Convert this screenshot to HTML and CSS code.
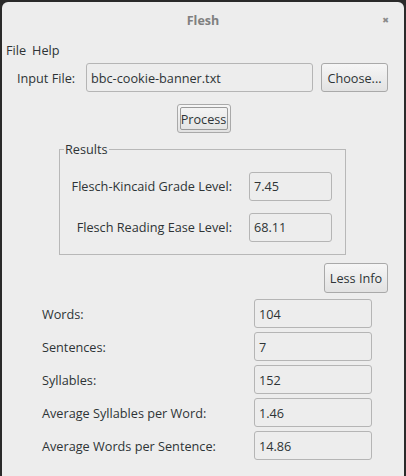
FILE: index.html
```html
<!DOCTYPE html>
<html>
<head>
<meta charset="utf-8">
<link rel="stylesheet" href="styles.css">
</head>
<body>
<div class="window">
  <div class="titlebar">
    <span class="title">Flesh</span>
    <span class="close">✖</span>
  </div>
  <div class="menubar"><span>File</span><span>Help</span></div>
  <div class="input-row">
    <span class="label">Input File:</span>
    <div class="entry wide">bbc-cookie-banner.txt</div>
    <div class="button choose">Choose...</div>
  </div>
  <div class="process-row">
    <div class="button process"><span class="focus">Process</span></div>
  </div>
  <div class="results">
    <span class="legend">Results</span>
    <div class="res-row">
      <span class="res-label">Flesch-Kincaid Grade Level:</span>
      <div class="entry small">7.45</div>
    </div>
    <div class="res-row">
      <span class="res-label">Flesch Reading Ease Level:</span>
      <div class="entry small">68.11</div>
    </div>
  </div>
  <div class="less-row">
    <div class="button less">Less Info</div>
  </div>
  <div class="stats">
    <div class="stat-row"><span class="stat-label">Words:</span><div class="entry stat">104</div></div>
    <div class="stat-row"><span class="stat-label">Sentences:</span><div class="entry stat">7</div></div>
    <div class="stat-row"><span class="stat-label">Syllables:</span><div class="entry stat">152</div></div>
    <div class="stat-row"><span class="stat-label">Average Syllables per Word:</span><div class="entry stat">1.46</div></div>
    <div class="stat-row"><span class="stat-label">Average Words per Sentence:</span><div class="entry stat">14.86</div></div>
  </div>
</div>
</body>
</html>
```
FILE: styles.css
```css
html, body {
  margin: 0;
  padding: 0;
}
body {
  background: #2a2a2a;
  padding: 2px 2px 0 2px;
  height: 476px;
  box-sizing: border-box;
  overflow: hidden;
  font-family: "Open Sans", "DejaVu Sans", sans-serif;
  font-size: 12.7px;
  color: #2e3436;
}
.window {
  background: #ededed;
  border-radius: 6px 6px 0 0;
  height: 474px;
  position: relative;
}
.titlebar {
  height: 36px;
  display: flex;
  align-items: center;
  justify-content: center;
  position: relative;
}
.title {
  font-weight: bold;
  color: #808080;
  font-size: 12.5px;
}
.close {
  position: absolute;
  right: 15px;
  top: 12px;
  font-size: 8px;
  color: #8a8a8a;
}
.menubar {
  height: 24px;
  display: flex;
  align-items: center;
  gap: 6px;
  padding-left: 4px;
}
.input-row {
  display: flex;
  align-items: center;
  height: 29px;
  margin-top: 1px;
  padding-left: 15px;
}
.label {
  width: 69px;
}
.entry {
  box-sizing: border-box;
  height: 29px;
  border: 1px solid #b5b5b5;
  border-radius: 3px;
  background: #ededed;
  display: flex;
  align-items: center;
  padding-left: 4px;
}
.wide { width: 227px; }
.button {
  box-sizing: border-box;
  height: 29px;
  border: 1px solid #a9a9a9;
  border-radius: 3px;
  background: linear-gradient(#f6f6f6, #e2e2e2);
  display: flex;
  align-items: center;
  justify-content: center;
}
.choose {
  width: 67px;
  margin-left: 8px;
}
.process-row {
  display: flex;
  justify-content: center;
  margin-top: 12px;
  padding-left: 1px;
}
.process {
  width: 54px;
  padding: 2px;
}
.focus {
  flex: 1;
  align-self: stretch;
  display: flex;
  align-items: center;
  justify-content: center;
  border: 1px solid #9a9a9a;
  border-radius: 2px;
}
.results {
  position: relative;
  margin: 16px 0 0 57px;
  width: 287px;
  height: 106px;
  box-sizing: border-box;
  border: 1px solid #b8b8b8;
  padding-top: 21px;
}
.legend {
  position: absolute;
  left: 4px;
  top: -9px;
  background: #ededed;
  padding: 0 1px;
  line-height: 16px;
}
.res-row {
  display: flex;
  align-items: center;
  justify-content: flex-end;
  padding-right: 13px;
  height: 30px;
  margin-bottom: 11px;
}
.res-label {
  margin-right: 17px;
}
.small { width: 83px; }
.less-row {
  display: flex;
  justify-content: flex-end;
  padding-right: 16px;
  margin-top: 8px;
}
.less { width: 64px; height: 30px; }
.stats {
  margin-top: 6px;
  padding-left: 40px;
}
.stat-row {
  display: flex;
  align-items: center;
  height: 29px;
  margin-bottom: 4px;
}
.stat-label {
  width: 212px;
}
.stat { width: 118px; }
```
